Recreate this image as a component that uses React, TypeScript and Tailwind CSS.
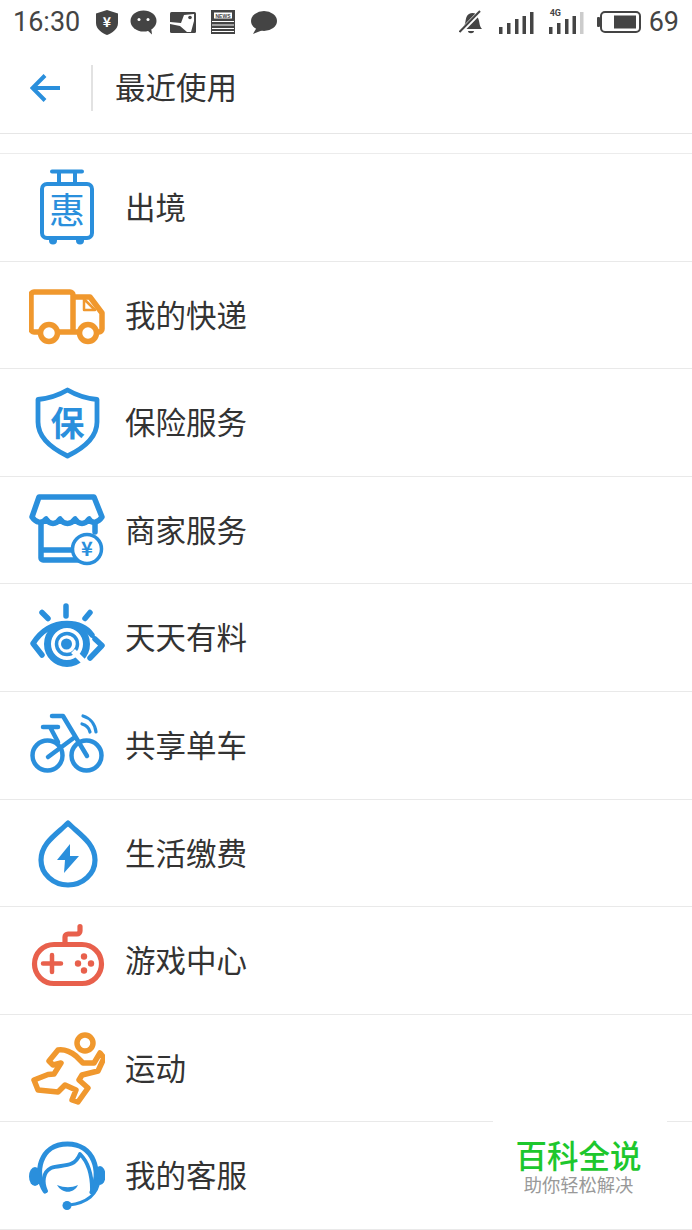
import React from "react";

const blue = "#2a8fdc";
const orange = "#f0982e";
const red = "#e8604c";
const dark = "#444444";
const cjk = "font-['Noto_Sans_CJK_SC','Noto_Sans',sans-serif]";

const IconBox = ({ children }: { children: React.ReactNode }) => (
  <svg width="76" height="76" viewBox="0 0 76 76" fill="none" className="shrink-0">
    {children}
  </svg>
);

const Suitcase = () => (
  <IconBox>
    <g stroke={blue} strokeWidth="4" strokeLinecap="round" strokeLinejoin="round">
      <path d="M23 2.500H53M30 3V14M46 3V14" />
      <rect x="13" y="15" width="50" height="54" rx="5" />
    </g>
    <circle cx="24" cy="71.500" r="4" fill={blue} />
    <circle cx="51" cy="71.500" r="4" fill={blue} />
    <text x="38" y="55" textAnchor="middle" fontSize="36" fill={blue} className={cjk}>惠</text>
  </IconBox>
);

const Truck = () => (
  <IconBox>
    <g stroke={orange} strokeWidth="5.500" strokeLinejoin="round" strokeLinecap="round">
      <path d="M11 55H5a3 3 0 0 1-3-3V18a3 3 0 0 1 3-3H41a3 3 0 0 1 3 3V52M30 55H49M44 20H61L73 36V52a3 3 0 0 1-3 3H68" />
      <circle cx="20" cy="56" r="8.500" />
      <circle cx="59" cy="56" r="8.500" />
      <path d="M55 22V33H66Z" strokeWidth="2.500" />
    </g>
  </IconBox>
);

const Shield = () => (
  <IconBox>
    <path
      d="M38.500 6C47 11 58 14.500 68 15.500V38C68 54 53 65 38.500 72C24 65 9 54 9 38V15.500C19 14.500 30 11 38.500 6Z"
      stroke={blue}
      strokeWidth="4.800"
      strokeLinejoin="round"
    />
    <text x="38.500" y="52" textAnchor="middle" fontSize="34" fontWeight="700" fill={blue} className={cjk}>保</text>
  </IconBox>
);

const Store = () => (
  <IconBox>
    <g stroke={blue} strokeWidth="5.500" strokeLinejoin="round" strokeLinecap="round">
      <path d="M10 5H65L73 25C69 31 63 32 60 27C56 33 50 33 46 27C42 33 35 33 31 27C27 33 21 33 17 27C13 32 7 31 3 25Z" />
      <path d="M12 31V66a2 2 0 0 0 2 2H50M12 58H46M66 31V40" />
    </g>
    <circle cx="58" cy="57" r="14.500" fill="#ffffff" stroke={blue} strokeWidth="3.500" />
    <text x="58" y="64" textAnchor="middle" fontSize="20" fontWeight="700" fill={blue} className={cjk}>¥</text>
  </IconBox>
);

const Eye = () => (
  <IconBox>
    <g stroke={blue} strokeLinecap="round" strokeLinejoin="round" fill="none">
      <path d="M37 6V16M13 12.500L19 18.500M61 12.500L56 18.500" strokeWidth="5.500" />
      <path d="M13 55L4 43.500C12 31 24 23.500 38 23.500C50 23.500 58 28 63 35M66 39L73 45.500L61 58" strokeWidth="5.500" />
      <circle cx="38" cy="44" r="19.500" strokeWidth="7" />
      <circle cx="38" cy="44" r="10.500" strokeWidth="3.500" />
    </g>
    <circle cx="37.500" cy="44" r="5.500" fill={blue} />
    <path d="M44 51L57 64" stroke="#ffffff" strokeWidth="5.500" />
  </IconBox>
);

const Bike = () => (
  <IconBox>
    <g stroke={blue} strokeWidth="4.500" strokeLinecap="round" strokeLinejoin="round">
      <circle cx="18.500" cy="48.500" r="15" />
      <circle cx="57.500" cy="48.500" r="15" />
      <path d="M23 9H34L58 49M14 20H29M21 20L29 35M46 30L19 50" />
      <path d="M54 9C61 11 66 17 67 25M53 17C57 18 60 21 61 25" strokeWidth="3.200" />
    </g>
  </IconBox>
);

const Drop = () => (
  <IconBox>
    <path
      d="M39 8C50 19 66 28 66 45A27 25 0 0 1 12 45C12 28 28 19 39 8Z"
      stroke={blue}
      strokeWidth="5.200"
      strokeLinejoin="round"
    />
    <path d="M41 29L28 45H36L35 58L50 41H41Z" fill={blue} />
  </IconBox>
);

const Gamepad = () => (
  <IconBox>
    <g stroke={red} strokeWidth="5.200" strokeLinecap="round" strokeLinejoin="round">
      <rect x="5.500" y="22.500" width="67" height="39" rx="19.500" />
      <path d="M36 22V15a3 3 0 0 1 3-3H48a3 3 0 0 0 3-3V4.500" />
      <path d="M14 41.500H32M23 33V50" strokeWidth="4.500" />
    </g>
    {[[49, 41.5], [55, 34.5], [62, 41.5], [55, 48.5]].map(([cx, cy]) => (
      <circle key={`${cx}-${cy}`} cx={cx} cy={cy} r="3.200" fill={red} />
    ))}
  </IconBox>
);

const Runner = () => (
  <IconBox>
    <g stroke={orange} strokeWidth="5.500" strokeLinejoin="round" strokeLinecap="round">
      <circle cx="56" cy="13" r="8" />
      <path d="M5 50L19 44.500L25 44L32 33L24 35L20 31L29 20C36 19 42 22 47 26L54 33L65 33L71 23L75 28L69 41L53 45L50 50L59 58L49 72L43 70L47 60L36 55L29 62L9 60Z" />
    </g>
  </IconBox>
);

const Headset = () => (
  <IconBox>
    <path d="M16 53C5 36 10 6 38.500 6C65 6 73 34 63 54" stroke={blue} strokeWidth="5" strokeLinecap="round" />
    <ellipse cx="6" cy="38.500" rx="6" ry="9.500" fill={blue} />
    <ellipse cx="71" cy="37.500" rx="5.500" ry="9.500" fill={blue} />
    <path
      d="M17 53C13 44 14 34 22 30C32 26 45 31 51 16C59 24 63 36 63 52"
      stroke={blue}
      strokeWidth="3.800"
      strokeLinecap="round"
      strokeLinejoin="round"
    />
    <path d="M28 47C36 50 42 50 49 47C45 56 33 56 28 47Z" fill={blue} />
    <path d="M70 42C69 56 58 65 40 67" stroke={blue} strokeWidth="3" strokeLinecap="round" />
    <circle cx="38" cy="67.500" r="4.500" fill={blue} />
  </IconBox>
);

const rows = [
  { label: "出境", icon: <Suitcase /> },
  { label: "我的快递", icon: <Truck /> },
  { label: "保险服务", icon: <Shield /> },
  { label: "商家服务", icon: <Store /> },
  { label: "天天有料", icon: <Eye /> },
  { label: "共享单车", icon: <Bike /> },
  { label: "生活缴费", icon: <Drop /> },
  { label: "游戏中心", icon: <Gamepad /> },
  { label: "运动", icon: <Runner /> },
  { label: "我的客服", icon: <Headset /> },
];

const SignalBars = ({ lastColor }: { lastColor: string }) => (
  <svg width="36" height="24" viewBox="0 0 36 24" className="shrink-0">
    <rect x="0" y="17" width="3.500" height="7" fill={dark} />
    <rect x="8" y="13" width="3.500" height="11" fill={dark} />
    <rect x="16" y="9" width="3.500" height="15" fill={dark} />
    <rect x="23.500" y="6" width="3.500" height="18" fill={dark} />
    <rect x="31" y="2" width="3.500" height="22" fill={lastColor} />
  </svg>
);

const StatusBar = () => (
  <div className="flex h-[44px] items-center justify-between px-[13px] text-[#444444]">
    <div className="flex items-center">
      <span className="w-[83px] text-[27px] leading-none font-['Roboto',sans-serif]">16:30</span>
      <svg width="22" height="25" viewBox="0 0 22 25" className="shrink-0">
        <path d="M11 0L22 3.500V13C22 19 16 23 11 25C6 23 0 19 0 13V3.500Z" fill={dark} />
        <text x="11" y="17" textAnchor="middle" fontSize="14" fontWeight="700" fill="#ffffff" className={cjk}>¥</text>
      </svg>
      <svg width="27" height="25" viewBox="0 0 27 25" className="ml-[12px] shrink-0">
        <ellipse cx="13.500" cy="11" rx="13" ry="10.500" fill={dark} />
        <path d="M17 20L22 24.500L21 17Z" fill={dark} />
        <circle cx="9" cy="9.500" r="1.500" fill="#ffffff" />
        <circle cx="18" cy="9.500" r="1.500" fill="#ffffff" />
      </svg>
      <svg width="26" height="21" viewBox="0 0 26 21" className="ml-[13px] shrink-0">
        <rect width="26" height="21" rx="1.500" fill={dark} />
        <path d="M0 10L11 11L14 3L24 2V9L21 20H17L10 14L0 12Z" fill="#ffffff" />
        <circle cx="20" cy="5.500" r="1.800" fill={dark} />
      </svg>
      <svg width="24" height="24" viewBox="0 0 24 24" className="ml-[15px] shrink-0">
        <rect width="24" height="24" fill={dark} />
        <rect x="3" y="2.500" width="18" height="6" fill="#ffffff" />
        <text x="12" y="7.500" textAnchor="middle" fontSize="5" fontWeight="700" fill={dark} fontFamily="Liberation Sans, sans-serif">NEWS</text>
        <path d="M1 11.500H23M1 15H23M1 18.500H23M1 21.500H23" stroke="#ffffff" strokeWidth="1.200" />
      </svg>
      <svg width="26" height="23" viewBox="0 0 26 23" className="ml-[16px] shrink-0">
        <ellipse cx="13" cy="10" rx="13" ry="10" fill={dark} />
        <path d="M6 16L2 23L12 19Z" fill={dark} />
      </svg>
    </div>
    <div className="flex items-center">
      <svg width="24" height="25" viewBox="0 0 24 25" className="shrink-0">
        <path d="M3 18C7 15 6 11 7.500 7C9 3 14 2 17 4L19 8C21 12 20 16 23 19H3Z" fill={dark} />
        <path d="M9 21H15C15 24 9 24 9 21Z" fill={dark} />
        <path d="M0.500 23L22 1" stroke="#ffffff" strokeWidth="4.500" />
        <path d="M0.500 22L21 1" stroke={dark} strokeWidth="2" />
      </svg>
      <div className="ml-[16px]">
        <SignalBars lastColor={dark} />
      </div>
      <div className="relative ml-[14px]">
        <SignalBars lastColor="#cccccc" />
        <span className="absolute left-[1px] top-[-1px] text-[9px] leading-none font-bold font-['Roboto',sans-serif]">4G</span>
      </div>
      <svg width="44" height="22" viewBox="0 0 44 22" className="ml-[12px] shrink-0">
        <rect x="0" y="6" width="3" height="10" rx="1" fill={dark} />
        <rect x="4" y="1" width="39" height="20" rx="4" fill="none" stroke={dark} strokeWidth="2" />
        <rect x="17" y="4.500" width="22" height="13" fill={dark} />
      </svg>
      <span className="ml-[8px] text-[27px] leading-none font-['Roboto',sans-serif]">69</span>
    </div>
  </div>
);

const App: React.FC = () => {
  return (
    <div className={`relative h-[1230px] w-[692px] overflow-hidden bg-white ${cjk}`}>
      <StatusBar />
      <header className="flex h-[90px] items-center border-b border-[#e6e6e6]">
        <div className="flex w-[91px] justify-center pb-[2px]">
          <svg width="32" height="30" viewBox="0 0 32 30">
            <path d="M30 15H3M15 2.500L2.500 15L15 27.500" fill="none" stroke={blue} strokeWidth="4" />
          </svg>
        </div>
        <div className="mb-[1px] h-[46px] w-[2px] bg-[#e2e2e2]" />
        <h1 className="mb-[4px] ml-[22px] text-[30.500px] leading-none font-normal text-[#333333]">最近使用</h1>
      </header>
      <ul className="mt-[19px] border-t border-[#ececec]">
        {rows.map((row) => (
          <li key={row.label} className="box-border flex h-[107.6px] items-center gap-[20px] border-b border-[#e9e9e9] pl-[29px]">
            {row.icon}
            <span className="mb-[2px] text-[30.500px] leading-none text-[#333333]">{row.label}</span>
          </li>
        ))}
      </ul>
      <div className="absolute bottom-[1px] left-[493px] flex h-[108px] w-[174px] flex-col items-center bg-white pr-[3px] pt-[15px]">
        <span className="text-[31.500px] leading-[36px] font-medium text-[#1dc72d]">百科全说</span>
        <span className="mt-[1px] text-[18.300px] leading-[22px] text-[#999999]">助你轻松解决</span>
      </div>
    </div>
  );
};

export default App;
